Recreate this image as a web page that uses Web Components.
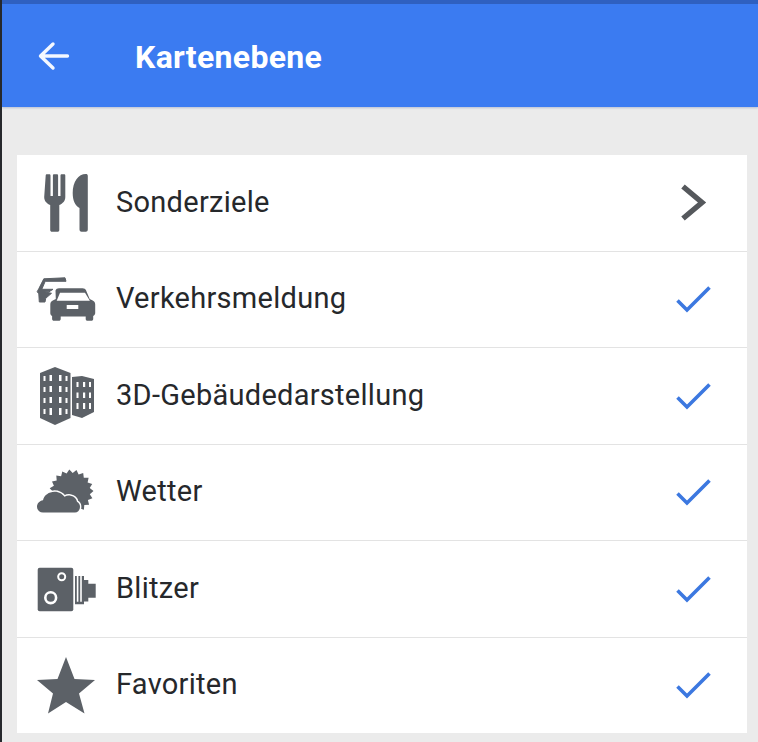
<!DOCTYPE html>
<html lang="de">
<head>
<meta charset="utf-8">
<title>Kartenebene</title>
<style>
  html, body { margin: 0; padding: 0; background: #ebebeb; }
  body { font-family: Roboto, "Liberation Sans", sans-serif; }
</style>
</head>
<body>
<template id="tpl-screen">
  <style>
    :host { display: flex; flex-direction: column; width: 758px; height: 742px; box-sizing: border-box;
      border-left: 2px solid #26282c; background: #ebebeb; overflow: hidden; }
    .content { display: flex; flex-direction: column; padding: 48px 11px 9px 15px; flex: 1; min-height: 0; }
  </style>
  <slot name="bar"></slot>
  <div class="content"><slot></slot></div>
</template>

<template id="tpl-bar">
  <style>
    :host { display: flex; align-items: center; flex: none; height: 103px; box-sizing: content-box;
      border-top: 4px solid #2f60c0; background: #3b7bf1; color: #fff; box-shadow: 0 1px 2px rgba(60,90,160,.3); }
    svg { flex: none; width: 40px; height: 40px; margin-left: 32px; }
    .t { margin-left: 61px; padding-top: 3px; font: 700 32px/36px Roboto, sans-serif; letter-spacing: .3px; }
  </style>
  <svg viewBox="34 35.500 40 40" fill="none" stroke="#f4f8ff" stroke-width="3.400" stroke-linecap="round" stroke-linejoin="round">
    <path d="M41 55.500H67.500M53 43.500L40.500 55.500L53 67.500"/>
  </svg>
  <span class="t"><slot></slot></span>
</template>

<template id="tpl-list">
  <style>
    :host { display: flex; flex-direction: column; flex: 1; min-height: 0; background: #fff; }
  </style>
  <slot></slot>
</template>

<template id="tpl-row">
  <style>
    :host { display: flex; align-items: center; flex: 1; min-height: 0; box-sizing: border-box;
      border-bottom: 1px solid #e3e3e3; background: #fff; }
    :host(:last-child) { border-bottom: 0; }
    .icon { flex: none; width: 70px; height: 70px; margin-left: 13px; display: flex; }
    .label { flex: 1; margin-left: 16px; padding-bottom: 2px; font: 400 29px/36px Roboto, sans-serif; color: #26282b; letter-spacing: .28px; }
    .end { flex: none; width: 50px; height: 50px; margin-right: 27px; display: flex; }
    ::slotted(svg) { display: block; }
  </style>
  <span class="icon"><slot name="icon"></slot></span>
  <span class="label"><slot></slot></span>
  <span class="end"><slot name="end"></slot></span>
</template>

<template id="tpl-chevron">
  <style>:host { display: block; width: 50px; height: 50px; } svg { display: block; }</style>
  <svg width="50" height="50" viewBox="670 178 50 50" fill="none" stroke="#55585c" stroke-width="5.400" stroke-linecap="butt" stroke-linejoin="miter">
    <path d="M683 186.500L702 202.500L683 218.500"/>
  </svg>
</template>

<template id="tpl-check">
  <style>:host { display: block; width: 50px; height: 50px; } svg { display: block; }</style>
  <svg width="50" height="50" viewBox="670 275 50 50" fill="none" stroke="#3c78e0" stroke-width="3.600" stroke-linecap="butt" stroke-linejoin="miter">
    <path d="M677.500 301.500L687 311L709.500 288.500"/>
  </svg>
</template>

<template id="tpl-sun">
  <style>:host { display: block; width: 70px; height: 70px; } svg { display: block; }</style>
  <svg width="70" height="70" viewBox="30 457 70 70" fill="#5c6167">
    <polygon class="rays"/>
    <path fill="#5c6167" stroke="#fff" stroke-width="2.800" paint-order="stroke" d="M43 512.500c-3.500 0-6-2.500-6-5.800s2.500-6 6-6.500c1-5 6-8.500 11.500-8.500c5 0 8 2.500 10 5c2-1 4-1.500 6-1c4 .8 6 3 6.500 6c2 1 3 3 3 5c0 3-2 5.800-5 5.800z"/>
  </svg>
</template>

<kt-screen>
  <kt-bar slot="bar">Kartenebene</kt-bar>
  <kt-list>
    <kt-row>
      <svg slot="icon" width="70" height="70" viewBox="30 168 70 70" fill="#5c6167">
        <path d="M45.700 175.500c0-.8.500-1.300 1.300-1.300h2.200c.8 0 1.300.5 1.300 1.300V196h2.400v-20.500c0-.8.500-1.300 1.300-1.300h2.600c.8 0 1.300.5 1.300 1.300V196h2.400v-20.500c0-.8.500-1.300 1.300-1.300h2.200c.8 0 1.300.5 1.300 1.300V197c0 4-2.500 6.500-6 8v25c0 1.200-.8 1.800-1.800 1.800h-5.500c-1 0-1.800-.6-1.800-1.800v-25c-3.500-1.500-6-4-6-8z"/>
        <path d="M87.800 176c0-1.300-.8-1.900-1.900-1.900c-7.500 0-13.200 7.500-13.200 19c0 7.500 2.500 12.500 6.800 15v21.500c0 1.500 1 2.200 2 2.200h4.300c1.100 0 2-.7 2-2.200z"/>
      </svg>
      Sonderziele
      <kt-chevron slot="end"></kt-chevron>
    </kt-row>
    <kt-row>
      <svg slot="icon" width="70" height="70" viewBox="30 264 70 70" fill="#5c6167">
        <path stroke="#5c6167" stroke-width="1" stroke-linejoin="round" d="M43.800 278.800L65 277.800L66 281.300H45.200L41.800 289.300H53L49 291.800H44.500L51.500 293.300L45.700 298.300L45 302H39.300L38.800 293.800L37.200 291.700L39 288.300z"/>
        <path fill-rule="evenodd" d="M55.500 290.500c.6-1.400 1.800-2.200 3.500-2.200h23.500c1.700 0 3 .8 3.600 2.200l3.600 8.500l3 1.500c1.600.8 2.500 2.200 2.500 4v8.500c0 1.400-.8 2.500-2 3v2.900c0 1-.8 1.800-1.800 1.800h-3.900c-1 0-1.800-.8-1.800-1.800v-2.400H60.700v2.400c0 1-.8 1.800-1.800 1.800h-5c-1 0-1.800-.8-1.800-1.800v-2.900c-1.200-.5-1.800-1.600-1.800-3v-8.500c0-1.800.9-3.200 2.500-4l3-1.500zM60 292.800l-3.300 7.900h33.200l-4.900-7.900zM66.700 305v4h11.600v-4z"/>
      </svg>
      Verkehrsmeldung
      <kt-check slot="end"></kt-check>
    </kt-row>
    <kt-row>
      <svg slot="icon" width="70" height="70" viewBox="30 361 70 70">
        <polygon fill="#5c6167" points="40,373 55,367 70.500,373 70.500,418 55,425 40,418"/>
        <polygon fill="#5c6167" points="72,377 82,376 94,379 94,412 82,418 72,415"/>
        <g fill="#fff">
          <rect x="43.500" y="376" width="2" height="5"/><rect x="49.500" y="375" width="2.500" height="6"/><rect x="59" y="375" width="2.500" height="6"/><rect x="65.500" y="376" width="2" height="5"/>
          <rect x="43.500" y="387" width="2" height="5"/><rect x="49.500" y="386" width="2.500" height="6"/><rect x="59" y="386" width="2.500" height="6"/><rect x="65.500" y="387" width="2" height="5"/>
          <rect x="43.500" y="398" width="2" height="5"/><rect x="49.500" y="397" width="2.500" height="6"/><rect x="59" y="397" width="2.500" height="6"/><rect x="65.500" y="398" width="2" height="5"/>
          <rect x="43.500" y="409" width="2" height="5"/><rect x="49.500" y="408" width="2.500" height="7"/><rect x="59" y="408" width="2.500" height="7"/><rect x="65.500" y="409" width="2" height="5"/>
          <rect x="76.500" y="382" width="2" height="5"/><rect x="83" y="382" width="2.200" height="5"/><rect x="89" y="382" width="2" height="5"/>
          <rect x="76.500" y="392.500" width="2" height="5.500"/><rect x="83" y="392.500" width="2.200" height="5.500"/><rect x="89" y="392.500" width="2" height="5.500"/>
          <rect x="76.500" y="403" width="2" height="6"/><rect x="83" y="403" width="2.200" height="6"/><rect x="89" y="403" width="2" height="6"/>
        </g>
      </svg>
      3D-Gebäudedarstellung
      <kt-check slot="end"></kt-check>
    </kt-row>
    <kt-row>
      <kt-sun slot="icon"></kt-sun>
      Wetter
      <kt-check slot="end"></kt-check>
    </kt-row>
    <kt-row>
      <svg slot="icon" width="70" height="70" viewBox="30 553 70 70" fill="#5c6167">
        <rect x="37.700" y="566.700" width="35.600" height="43.500" rx="2"/>
        <circle cx="50.700" cy="596.700" r="5.400" fill="none" stroke="#fff" stroke-width="2.600"/>
        <circle cx="61.700" cy="575.700" r="3.500" fill="none" stroke="#fff" stroke-width="2"/>
        <rect x="75" y="575" width="1.800" height="26"/>
        <rect x="78.400" y="575" width="1.800" height="26"/>
        <path d="M81.800 575h2.200v4h4.300v3.700h7.400v14h-7.400v3.800H84v2.800h-9v-2.600h6.800z"/>
      </svg>
      Blitzer
      <kt-check slot="end"></kt-check>
    </kt-row>
    <kt-row>
      <svg slot="icon" width="70" height="70" viewBox="30 650 70 70" fill="#5c6167">
        <polygon points="66,657 74.500,679 95,680 79,693.500 84.500,713.500 66,702 48,713.500 53,693.500 37,680 57.500,679"/>
      </svg>
      Favoriten
      <kt-check slot="end"></kt-check>
    </kt-row>
  </kt-list>
</kt-screen>

<script>
  class Base extends HTMLElement {
    constructor() {
      super();
      const id = this.constructor.tpl;
      this.attachShadow({ mode: 'open' }).appendChild(document.getElementById(id).content.cloneNode(true));
    }
  }
  const def = (name, tpl, init) => {
    customElements.define(name, class extends Base {
      static tpl = tpl;
      constructor() { super(); if (init) init(this.shadowRoot); }
    });
  };
  def('kt-screen', 'tpl-screen');
  def('kt-bar', 'tpl-bar');
  def('kt-list', 'tpl-list');
  def('kt-row', 'tpl-row');
  def('kt-chevron', 'tpl-chevron');
  def('kt-check', 'tpl-check');
  def('kt-sun', 'tpl-sun', root => {
    const pts = [], n = 19, cx = 71.500, cy = 491.500;
    for (let i = 0; i < n * 2; i++) {
      const a = Math.PI * i / n - Math.PI / 2 - 0.1;
      const r = i % 2 ? 18.500 : 22;
      pts.push((cx + r * Math.cos(a)).toFixed(1) + ',' + (cy + r * Math.sin(a)).toFixed(1));
    }
    root.querySelector('.rays').setAttribute('points', pts.join(' '));
  });
</script>
</body>
</html>
